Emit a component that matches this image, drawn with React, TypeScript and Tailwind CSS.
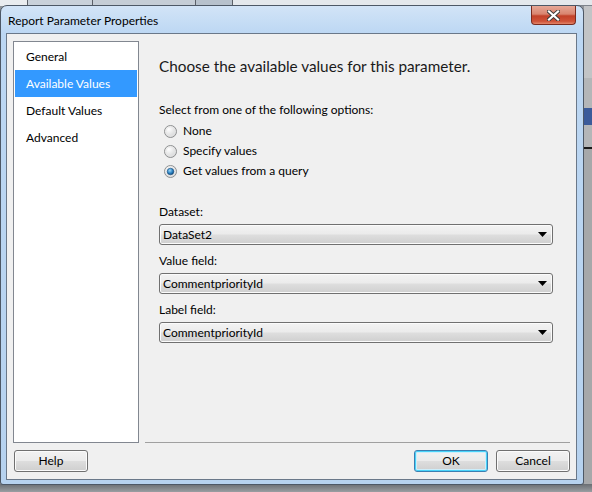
import React from "react";

const F = "font-['Lato','Noto_Sans',sans-serif]";

function Radio({ checked }: { checked?: boolean }) {
  return (
    <svg width="13" height="13" viewBox="0 0 13 13" className="shrink-0">
      <defs>
        <radialGradient id="rg" cx="0.35" cy="0.3" r="0.8">
          <stop offset="0" stopColor="#ffffff" />
          <stop offset="1" stopColor="#cfd0d1" />
        </radialGradient>
        <radialGradient id="dot" cx="0.4" cy="0.35" r="0.7">
          <stop offset="0" stopColor="#9fd6f5" />
          <stop offset="0.55" stopColor="#2f86c6" />
          <stop offset="1" stopColor="#0b3f70" />
        </radialGradient>
      </defs>
      <circle cx="6.5" cy="6.5" r="6" fill="url(#rg)" stroke="#8e9091" strokeWidth="1" />
      <circle cx="6.5" cy="6.5" r="4.6" fill="none" stroke="#e6e6e6" strokeWidth="0.8" />
      {checked && <circle cx="6.5" cy="6.5" r="3.3" fill="url(#dot)" stroke="#1a4f7f" strokeWidth="0.6" />}
    </svg>
  );
}

function RadioRow({ label, checked }: { label: string; checked?: boolean }) {
  return (
    <div className="flex h-[20px] items-center pl-[5px]">
      <Radio checked={checked} />
      <span className="ml-[6px] text-[12px] text-black">{label}</span>
    </div>
  );
}

function Dropdown({ value }: { value: string }) {
  return (
    <div className="flex h-[21px] w-[394px] items-center justify-between rounded-[3px] border border-[#707070] bg-[linear-gradient(to_bottom,#f3f3f3_0%,#ebebeb_48%,#dedede_52%,#cfcfcf_100%)] pl-[3px] pr-[5px] shadow-[inset_0_0_0_1px_#fbfbfb]">
      <span className="text-[12px] leading-none text-black">{value}</span>
      <svg width="9" height="5" viewBox="0 0 9 5">
        <polygon points="0,0 9,0 4.5,5" fill="#000" />
      </svg>
    </div>
  );
}

function Button({ label, def }: { label: string; def?: boolean }) {
  return (
    <div
      className={
        def
          ? "flex h-[22px] w-[74px] items-center justify-center rounded-[3px] border border-[#3c7fb1] bg-[linear-gradient(to_bottom,#f2f2f2_0%,#ebebeb_48%,#dddddd_52%,#cfcfcf_100%)] text-[12px] text-black shadow-[inset_0_0_0_1px_#48d3f9,inset_0_0_0_2px_#cdeefb]"
          : "flex h-[22px] w-[74px] items-center justify-center rounded-[3px] border border-[#707070] bg-[linear-gradient(to_bottom,#f2f2f2_0%,#ebebeb_48%,#dddddd_52%,#cfcfcf_100%)] text-[12px] text-black shadow-[inset_0_0_0_1px_#fbfbfb]"
      }
    >
      {label}
    </div>
  );
}

export default function App() {
  const nav = ["General", "Available Values", "Default Values", "Advanced"];
  return (
    <div className={`relative h-[492px] w-[592px] overflow-hidden bg-[#8f9499] ${F}`}>
      {/* desktop behind */}
      <div className="absolute left-0 top-0 flex h-[6px] w-full">
        <div className="w-[27px] bg-[#e9ecef]" />
        <div className="w-[66px] border-x border-b border-[#5b6068] bg-[#c9d1da]" />
        <div className="w-[103px] border-r border-b border-[#5b6068] bg-[#c5cdd6]" />
        <div className="w-[37px] border-r border-b border-[#5b6068] bg-[#b7c1cc]" />
        <div className="flex-1 border-b border-[#7d848c] bg-[#e4e8ec]" />
      </div>
      <div className="absolute right-0 top-[6px] flex h-[480px] w-[8px] flex-col bg-[#b4b6b8]">
        <div className="h-[72px] bg-[#c2c4c6]" />
        <div className="h-[30px]" />
        <div className="h-[17px] bg-[#3b5b9a]" />
        <div className="h-[22px]" />
        <div className="h-[2px] bg-[#1b1b1b]" />
        <div className="flex-1 bg-[#a6a8aa]" />
      </div>
      <div className="absolute bottom-0 left-0 h-[8px] w-full bg-linear-to-b from-[#6a6e73] to-[#9a9ea2]" />

      {/* window */}
      <div className="absolute left-0 top-[5px] flex h-[480px] w-[584px] flex-col rounded-t-[7px] rounded-b-[3px] border border-[#4d5866] bg-[linear-gradient(to_bottom,#d2e4f7_0px,#bcd7f3_28px,#b6d2ef_100%)] pb-[4px] pl-[5px] pr-[6px]">
        {/* title bar */}
        <div className="relative flex h-[27px] items-center pl-[2px] pt-[2px]">
          <span className="text-[12px] text-black">Report Parameter Properties</span>
          <div className="absolute right-[1px] top-0 flex h-[19px] w-[45px] items-center justify-center rounded-b-[4px] border border-t-0 border-[#7a2b1e] bg-[linear-gradient(to_bottom,#e6a897_0%,#d9846f_45%,#c24129_55%,#cf5339_85%,#e2866a_100%)]">
            <svg width="13" height="11" viewBox="0 0 13 11">
              <path d="M2 1.5 L11 9.5 M11 1.5 L2 9.5" stroke="#3a3a3a" strokeWidth="4" strokeLinecap="square" />
              <path d="M2 1.5 L11 9.5 M11 1.5 L2 9.5" stroke="#ffffff" strokeWidth="2.2" strokeLinecap="square" />
            </svg>
          </div>
        </div>

        {/* client */}
        <div className="flex flex-1 flex-col border border-[#6a7889] bg-[#f0f0f0] px-[6px] pb-[7px] pt-[7px]">
          <div className="flex h-[402px] gap-[6px]">
            <div className="flex w-[126px] flex-col border border-[#828790] bg-white p-[1px]">
              {nav.map((n, i) => (
                <div
                  key={n}
                  className={
                    i === 1
                      ? "flex h-[27px] items-center bg-[#3399ff] pl-[11px] text-[12px] text-white"
                      : "flex h-[27px] items-center pl-[11px] text-[12px] text-black"
                  }
                >
                  {n}
                </div>
              ))}
            </div>
            <div className="flex flex-1 flex-col border-b border-[#a0a0a0] pl-[14px] pt-[15px]">
              <div className="flex h-[20px] items-center text-[15.3px] text-[#1a1a1a]">
                Choose the available values for this parameter.
              </div>
              <div className="mt-[26px] flex h-[16px] items-center text-[12px] text-black">
                Select from one of the following options:
              </div>
              <div className="mt-[3px] flex flex-col">
                <RadioRow label="None" />
                <RadioRow label="Specify values" />
                <RadioRow label="Get values from a query" checked />
              </div>
              <div className="mt-[23px] flex h-[16px] items-center text-[12px] text-black">Dataset:</div>
              <div className="mt-[4px]">
                <Dropdown value="DataSet2" />
              </div>
              <div className="mt-[8px] flex h-[16px] items-center text-[12px] text-black">Value field:</div>
              <div className="mt-[4px]">
                <Dropdown value="CommentpriorityId" />
              </div>
              <div className="mt-[8px] flex h-[16px] items-center text-[12px] text-black">Label field:</div>
              <div className="mt-[4px]">
                <Dropdown value="CommentpriorityId" />
              </div>
            </div>
          </div>
          <div className="mt-[7px] flex items-center">
            <div className="ml-[1px]">
              <Button label="Help" />
            </div>
            <div className="ml-auto flex gap-[8px]">
              <Button label="OK" def />
              <Button label="Cancel" />
            </div>
          </div>
        </div>
      </div>
    </div>
  );
}
